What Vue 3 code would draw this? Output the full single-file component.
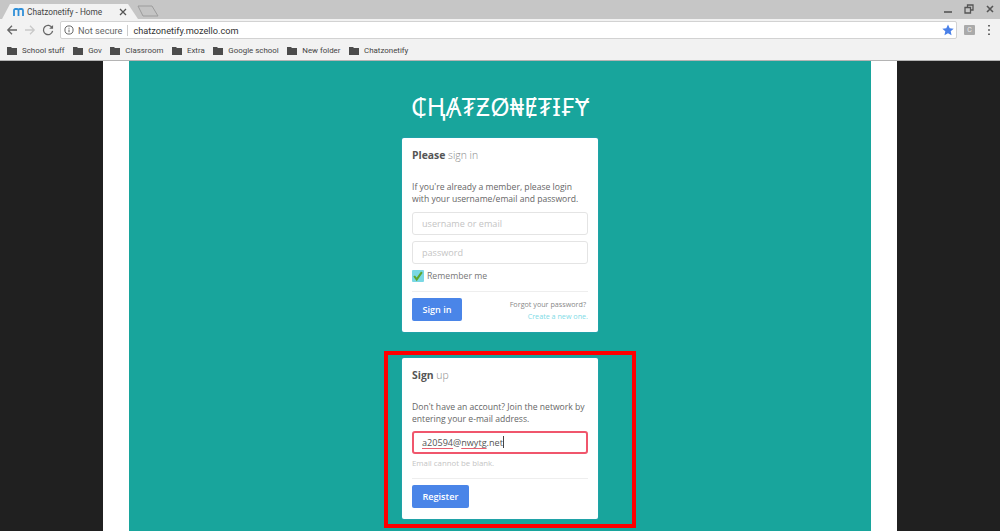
<script setup>
const bookmarks = ['School stuff', 'Gov', 'Classroom', 'Extra', 'Google school', 'New folder', 'Chatzonetify']
</script>

<template>
  <div class="page">
    <header class="chrome">
      <div class="tabstrip">
        <div class="tab">
          <svg class="tab-logo" width="11" height="8" viewBox="0 0 11 8"><path d="M1 8V2.500Q1 1 2.500 1H4Q5.500 1 5.500 2.500V8M5.500 2.500Q5.500 1 7 1H8.500Q10 1 10 2.500V8" fill="none" stroke="#2f8fd8" stroke-width="1.800" /></svg>
          <span class="tab-title">Chatzonetify - Home</span>
          <svg class="tab-x" width="8" height="8" viewBox="0 0 8 8"><path d="M1 1l6 6M7 1L1 7" stroke="#555" stroke-width="1.300" /></svg>
        </div>
        <svg class="newtab" width="22" height="12" viewBox="0 0 22 12"><path d="M1 1h14l6 10H6z" fill="#c4c4c4" stroke="#9c9c9c" /></svg>
        <div class="winctl">
          <svg width="10" height="10" viewBox="0 0 10 10"><path d="M1 8h8" stroke="#555" stroke-width="1.600" /></svg>
          <svg width="10" height="10" viewBox="0 0 10 10"><path d="M3.500 3V1h5.500v5H7M1 3.500h5.500V9H1z" fill="none" stroke="#555" stroke-width="1.300" /></svg>
          <svg width="10" height="10" viewBox="0 0 10 10"><path d="M2 2l6 6M8 2L2 8" stroke="#555" stroke-width="1.600" /></svg>
        </div>
      </div>
      <div class="toolbar">
        <svg class="nav" width="12" height="12" viewBox="0 0 12 12"><path d="M11 6H2M6 1.800L1.800 6 6 10.200" fill="none" stroke="#666" stroke-width="1.300" /></svg>
        <svg class="nav" width="12" height="12" viewBox="0 0 12 12"><path d="M1 6h9M6 1.800L10.200 6 6 10.200" fill="none" stroke="#c9c9c9" stroke-width="1.300" /></svg>
        <svg class="nav" width="12" height="12" viewBox="0 0 13 13"><path d="M11 4.200A5 5 0 1 0 11.500 7.500" fill="none" stroke="#666" stroke-width="1.400" /><path d="M12 1v4.200H7.800z" fill="#666" /></svg>
        <div class="omnibox">
          <svg width="10" height="10" viewBox="0 0 11 11"><circle cx="5.500" cy="5.500" r="4.500" fill="none" stroke="#666" stroke-width="1.100" /><path d="M5.500 5v3M5.500 3v1.100" stroke="#666" stroke-width="1.100" /></svg>
          <span class="secure">Not secure</span>
          <span class="sep"></span>
          <span class="url">chatzonetify.mozello.com</span>
          <svg class="star" width="12" height="12" viewBox="0 0 24 24"><path d="M12 1l3.400 7.400 8 .9-6 5.400 1.700 8L12 18.700 4.900 22.700l1.700-8-6-5.400 8-.9z" fill="#4a80e8" /></svg>
        </div>
        <span class="ext">C</span>
        <svg class="menu" width="4" height="12" viewBox="0 0 4 12"><path d="M2 1v1.500M2 5.300v1.500M2 9.500V11" stroke="#666" stroke-width="2" /></svg>
      </div>
      <nav class="bookmarks">
        <span v-for="b in bookmarks" :key="b" class="bm">
          <svg width="10" height="8" viewBox="0 0 10 8"><path d="M0 0h4l1 1h5v7H0z" fill="#4c4c4c" /></svg>
          {{ b }}
        </span>
      </nav>
    </header>

    <main class="stage">
      <div class="white">
        <div class="teal">
          <div class="logo">₵ⱧȺ₮ƵØ₦Ɇ₮Ɨ₣Ɏ</div>

          <section class="card signin">
            <h2><b>Please</b> sign in</h2>
            <p>If you're already a member, please login with your username/email and password.</p>
            <div class="input ph">username or email</div>
            <div class="input ph">password</div>
            <label class="remember">
              <span class="box"><svg width="14" height="12" viewBox="0 0 14 12"><path d="M2.500 6l3 4 6-8.500" fill="none" stroke="#5fa62e" stroke-width="2.400" /></svg></span>Remember me
            </label>
            <div class="foot">
              <span class="btn">Sign in</span>
              <div class="forgot">
                <span class="q">Forgot your password?</span>
                <span class="link">Create a new one.</span>
              </div>
            </div>
          </section>

          <section class="card signup">
            <h2><b>Sign</b> up</h2>
            <p>Don't have an account? Join the network by entering your e-mail address.</p>
            <div class="input err"><u>a20594</u>@<u>nwytg</u>.net<i class="caret"></i></div>
            <div class="hint">Email cannot be blank.</div>
            <div class="foot">
              <span class="btn">Register</span>
            </div>
          </section>
        </div>
      </div>
      <div class="redbox"></div>
    </main>
  </div>
</template>

<style>
html, body { margin: 0; background: #202020; overflow: hidden; }
</style>

<style scoped>
.page { width: 1000px; height: 531px; overflow: hidden; font-family: "Open Sans", sans-serif; display: flex; flex-direction: column; }
.chrome { height: 61px; flex: none; background: #f2f2f2; font-family: "Roboto", sans-serif; border-bottom: 1px solid #b4b4b4; box-sizing: border-box; }
.tabstrip { height: 19px; background: #c6c6c6; display: flex; align-items: flex-end; padding-left: 2px; position: relative; }
.tab { width: 136px; height: 15px; background: #f2f2f2; clip-path: polygon(0 100%, 8px 0, 126px 0, 100% 100%); display: flex; align-items: center; padding-left: 11px; box-sizing: border-box; color: #444; font-size: 8.300px; }
.tab-logo { margin-right: 3px; }
.tab-title { flex: 1; white-space: nowrap; }
.tab-x { margin-right: 11px; }
.newtab { margin: 0 0 2px -1px; }
.winctl { position: absolute; right: 5px; top: 4px; display: flex; gap: 11px; }
.toolbar { height: 22px; display: flex; align-items: center; padding-left: 6px; gap: 6px; }
.omnibox { width: 897px; height: 18px; background: #fff; border: 1px solid #d2d2d2; box-sizing: border-box; border-radius: 2px; display: flex; align-items: center; padding-left: 3px; font-size: 9.200px; }
.secure { color: #666; margin-left: 4px; }
.sep { width: 1px; height: 11px; background: #ccc; margin: 0 5px; }
.url { color: #333; font-size: 9.200px; }
.star { margin-left: auto; margin-right: 2px; }
.ext { width: 11px; height: 10px; background: #aaa; color: #eee; font-size: 7px; line-height: 10px; text-align: center; margin-left: 1px; border-radius: 1px; }
.menu { margin-left: 6px; }
.bookmarks { height: 19px; display: flex; align-items: center; padding-left: 7px; gap: 8.600px; font-size: 7.900px; color: #444; }
.bm { display: flex; align-items: center; gap: 5px; white-space: nowrap; }

.stage { flex: 1; background: #202020; position: relative; display: flex; justify-content: center; min-height: 0; }
.white { width: 794px; background: #fff; display: flex; justify-content: center; }
.teal { width: 742px; background: #18a59c; display: flex; flex-direction: column; align-items: center; }
.logo { margin-top: 30px; font: 400 25px/30px "Noto Sans", "DejaVu Sans", sans-serif; color: #fff; height: 30px; white-space: nowrap; margin-bottom: 17px; }

.card { width: 196px; box-sizing: border-box; background: #fff; border-radius: 2px; padding: 0 10px; box-shadow: 0 0 2px #3a9fc8; color: #666; flex: none; }
.signin { height: 194px; margin-bottom: 26px; }
.signup { height: 161px; }
h2 { margin: 0; padding-top: 9px; font-size: 10.400px; line-height: 16px; font-weight: 300; color: #888; }
h2 b { color: #555; font-weight: 700; }
p { margin: 18px 0 0; font-size: 8.600px; line-height: 12px; color: #666; }
.input { height: 23px; box-sizing: border-box; border: 1px solid #e4e4e4; border-radius: 3px; padding-left: 9px; line-height: 21px; font-size: 9.100px; margin-top: 7px; width: 176px; }
.input + .input { margin-top: 6px; }
.ph { color: #c4c4c4; }
.err { border: 2px solid #f0566c; color: #555; position: relative; margin-top: 6px; line-height: 19px; padding-left: 8px; }
.err u { text-decoration: underline solid #e86070 1px; text-underline-offset: 2px; }
.caret { display: inline-block; width: 1px; height: 12px; background: #444; vertical-align: -2px; }
.remember { display: flex; align-items: center; font-size: 8.700px; color: #777; height: 14px; margin-top: 5px; }
.box { width: 12px; height: 12px; background: #7ad8e4; border-radius: 1px; margin-right: 3px; display: flex; }
.foot { border-top: 1px solid #eee; margin-top: 8px; padding-top: 6px; display: flex; justify-content: space-between; }
.btn { height: 23px; padding: 0 10.500px; background: #4a85e8; color: #fff; border-radius: 2px; font-size: 9.100px; font-weight: 600; line-height: 23px; }
.forgot { display: flex; flex-direction: column; align-items: flex-end; font-size: 7.200px; line-height: 12px; color: #888; }
.q { margin-right: 2px; }
.link { color: #7fdbe6; }
.hint { font-size: 7.800px; color: #c4c4c4; margin-top: 3px; line-height: 12px; }
.signup .foot { margin-top: 9px; }

.redbox { position: absolute; left: 384px; top: 290px; width: 252px; height: 177px; box-sizing: border-box; border: 4px solid #f00; }
</style>
